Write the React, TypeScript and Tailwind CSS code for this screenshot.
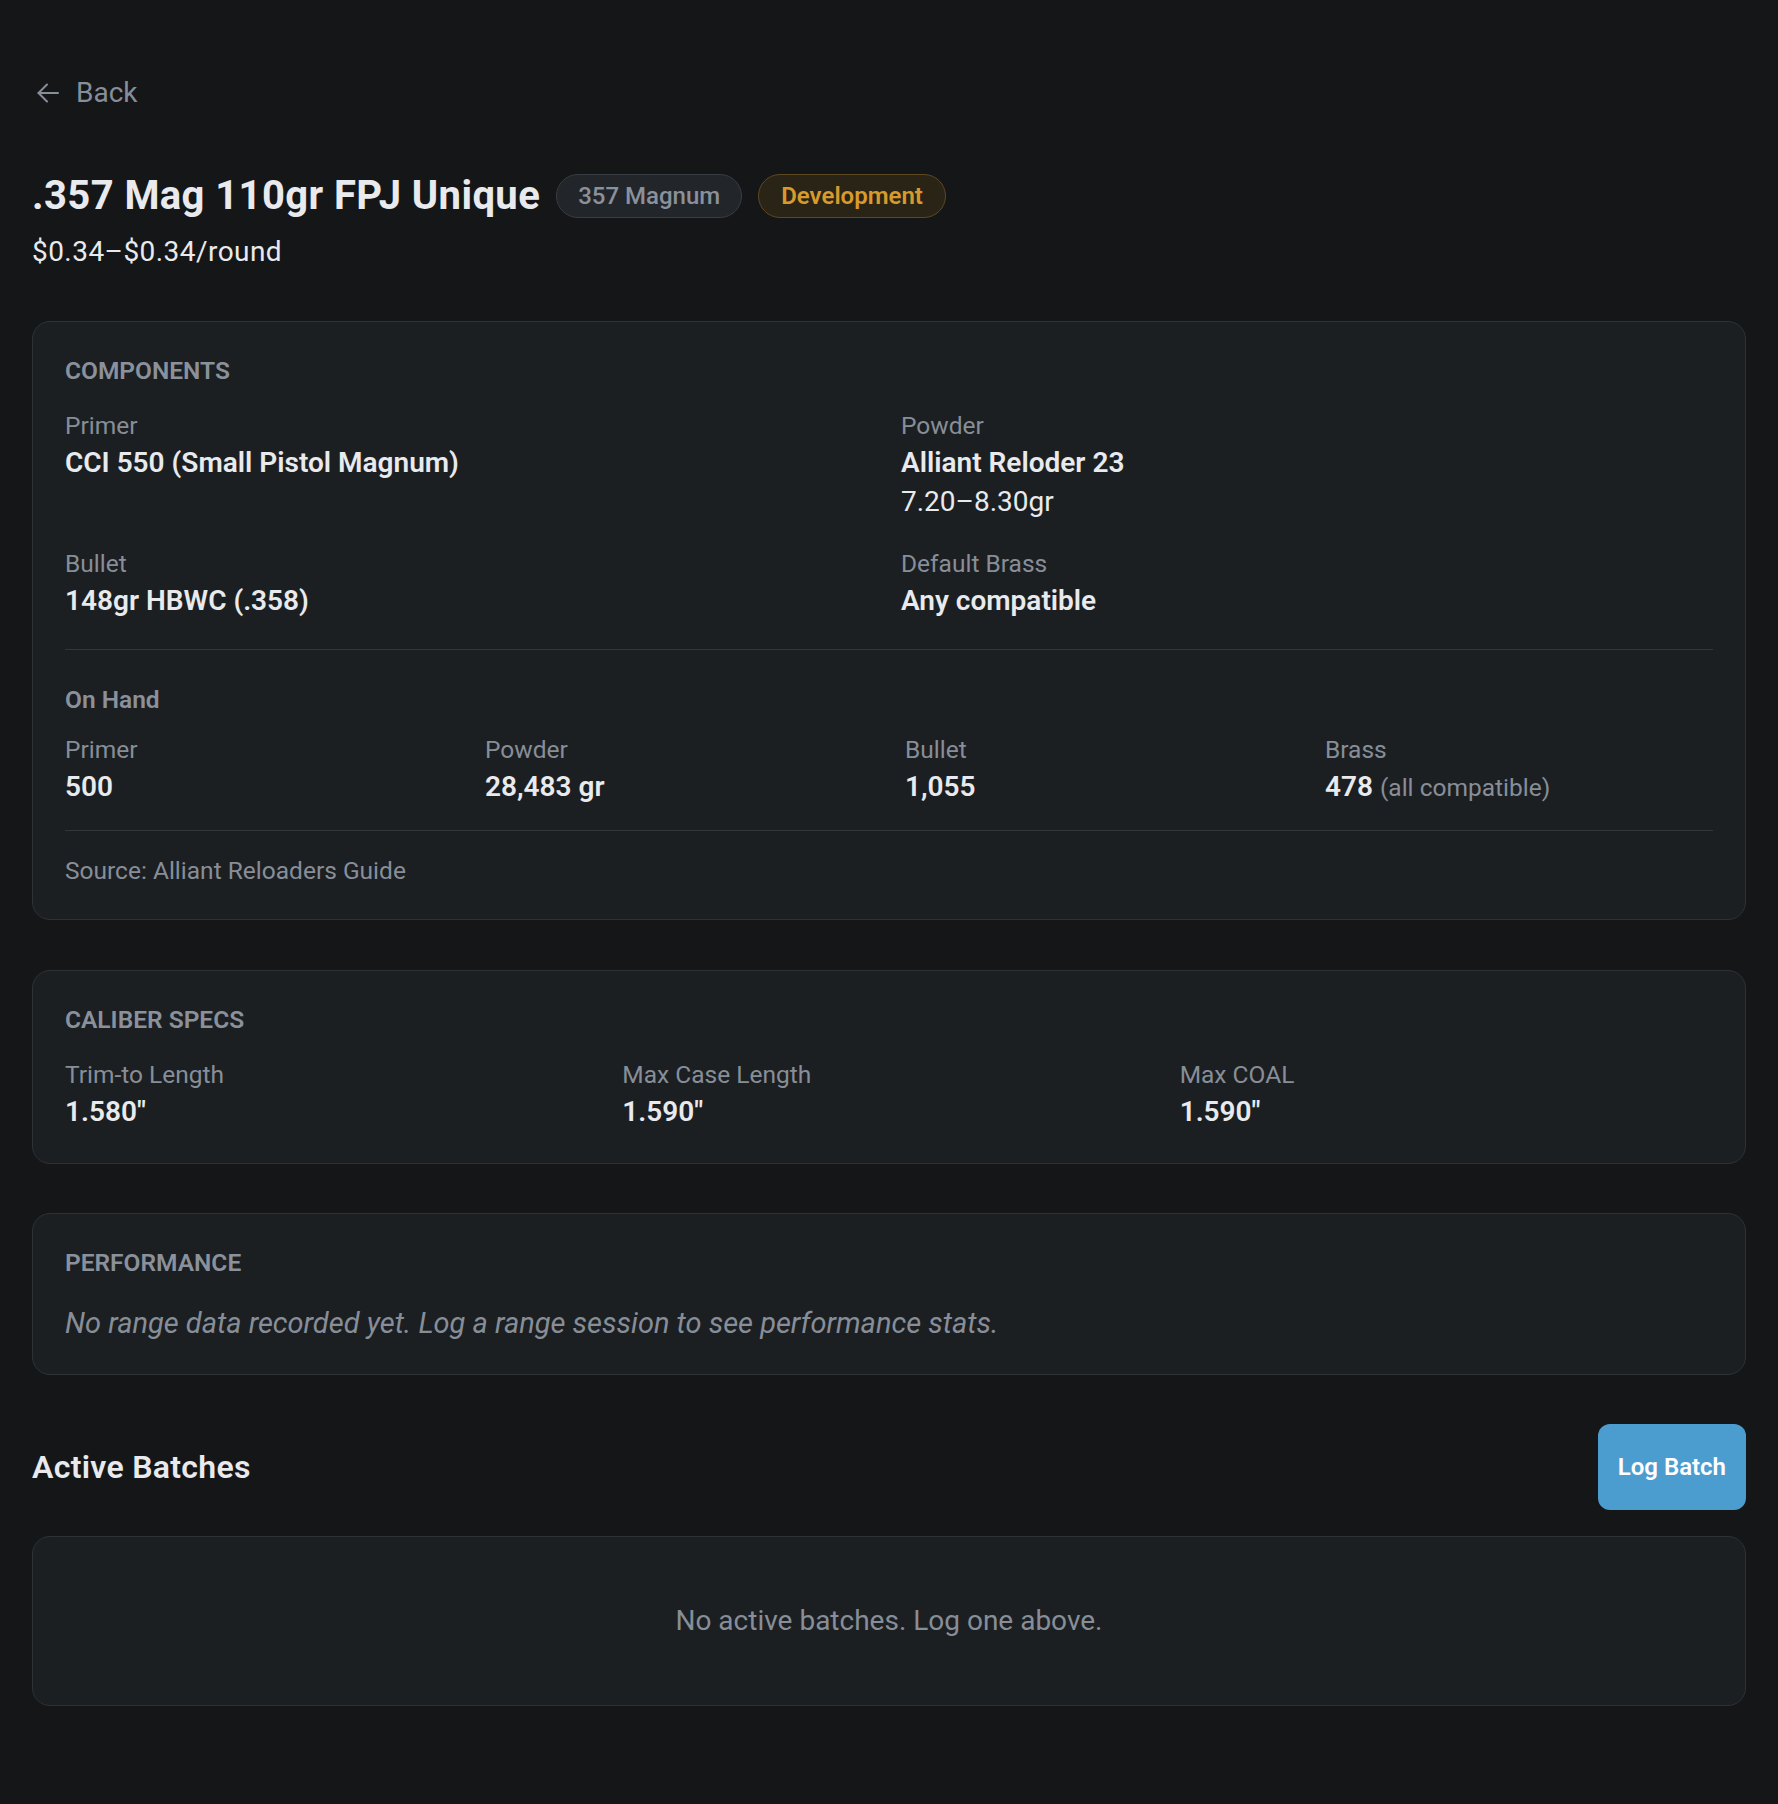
import { ReactNode } from "react";

const FONT = { fontFamily: "Roboto, 'Noto Sans', sans-serif" };

function Label({ children }: { children: ReactNode }) {
	return <p className="text-[24.5px] leading-[35px] text-[#878e98]">{children}</p>;
}

function Value({ children }: { children: ReactNode }) {
	return <p className="text-[28px] leading-[39px] font-semibold text-[#e8eaed]">{children}</p>;
}

function Field({ label, children }: { label: string; children: ReactNode }) {
	return (
		<div>
			<Label>{label}</Label>
			{children}
		</div>
	);
}

function Card({ children, className = "" }: { children: ReactNode; className?: string }) {
	return (
		<div className={`rounded-[18px] border border-[#2e3237] bg-[#1c1f22] p-8 ${className}`}>
			{children}
		</div>
	);
}

function SectionTitle({ children }: { children: ReactNode }) {
	return (
		<h2 className="text-[24.5px] leading-[34px] font-semibold uppercase text-[#8a919b]">
			{children}
		</h2>
	);
}

export default function App() {
	return (
		<div style={FONT} className="min-h-screen bg-[#151618] px-8 pt-[73px] pb-24 text-[#e8eaed]">
			<button className="ml-[5px] flex items-center gap-[17px] text-[28px] leading-[40px] text-[#878e98]">
				<svg width="22" height="20" viewBox="0 0 22 20" fill="none" stroke="currentColor" strokeWidth="2" strokeLinecap="round" strokeLinejoin="round">
					<path d="M21 10H1.5" />
					<path d="M10 1.5 1.5 10l8.5 8.5" />
				</svg>
				Back
			</button>

			<div className="mt-[59px] flex items-center gap-4">
				<h1 className="text-[40px] leading-[48px] font-bold tracking-[0.4px]">.357 Mag 110gr FPJ Unique</h1>
				<span className="rounded-full border border-[#383d43] bg-[#22262a] px-[21px] text-[24px] leading-[42px] font-medium text-[#8a919b]">
					357 Magnum
				</span>
				<span className="rounded-full border border-[#5e4820] bg-[#2a2417] px-[22px] text-[24px] leading-[42px] font-semibold text-[#d69a2d]">
					Development
				</span>
			</div>
			<p className="mt-[14px] text-[28px] leading-[36px] tracking-[0.45px]">$0.34–$0.34/round</p>

			<Card className="mt-[51px]">
				<SectionTitle>Components</SectionTitle>
				<div className="mt-5 grid grid-cols-2 gap-x-6 gap-y-6">
					<Field label="Primer">
						<Value>CCI 550 (Small Pistol Magnum)</Value>
					</Field>
					<Field label="Powder">
						<Value>Alliant Reloder 23</Value>
						<p className="text-[28px] leading-[40px] text-[#e8eaed]">7.20–8.30gr</p>
					</Field>
					<Field label="Bullet">
						<Value>148gr HBWC (.358)</Value>
					</Field>
					<Field label="Default Brass">
						<Value>Any compatible</Value>
					</Field>
				</div>

				<div className="mt-[29px] border-t border-[#33373c] pt-8">
					<h3 className="text-[24.5px] leading-[36px] font-semibold text-[#8a919b]">On Hand</h3>
					<div className="mt-[14px] grid grid-cols-4 gap-8">
						<Field label="Primer">
							<Value>500</Value>
						</Field>
						<Field label="Powder">
							<Value>28,483 gr</Value>
						</Field>
						<Field label="Bullet">
							<Value>1,055</Value>
						</Field>
						<Field label="Brass">
							<Value>
								478 <span className="text-[24.5px] font-normal text-[#878e98]">(all compatible)</span>
							</Value>
						</Field>
					</div>
				</div>

				<div className="mt-[23px] border-t border-[#33373c] pt-6">
					<p className="text-[24.5px] leading-[32px] text-[#878e98]">Source: Alliant Reloaders Guide</p>
				</div>
			</Card>

			<Card className="mt-[50px]">
				<SectionTitle>Caliber Specs</SectionTitle>
				<div className="mt-5 grid grid-cols-3 gap-6">
					<Field label="Trim-to Length">
						<Value>1.580"</Value>
					</Field>
					<Field label="Max Case Length">
						<Value>1.590"</Value>
					</Field>
					<Field label="Max COAL">
						<Value>1.590"</Value>
					</Field>
				</div>
			</Card>

			<Card className="mt-[49px]">
				<SectionTitle>Performance</SectionTitle>
				<p className="mt-6 text-[29px] leading-[38px] italic text-[#878e98]">
					No range data recorded yet. Log a range session to see performance stats.
				</p>
			</Card>

			<div className="mt-[49px] flex items-center justify-between">
				<h2 className="text-[32px] leading-[40px] font-semibold tracking-[0.3px]">Active Batches</h2>
				<button className="h-[86px] rounded-xl bg-[#4b9dd0] px-5 text-[24px] font-semibold text-white">
					Log Batch
				</button>
			</div>

			<div className="mt-[26px] flex h-[170px] items-center justify-center rounded-[18px] border border-[#2e3237] bg-[#1c1f22]">
				<p className="text-[28px] text-[#878e98]">No active batches. Log one above.</p>
			</div>
		</div>
	);
}
